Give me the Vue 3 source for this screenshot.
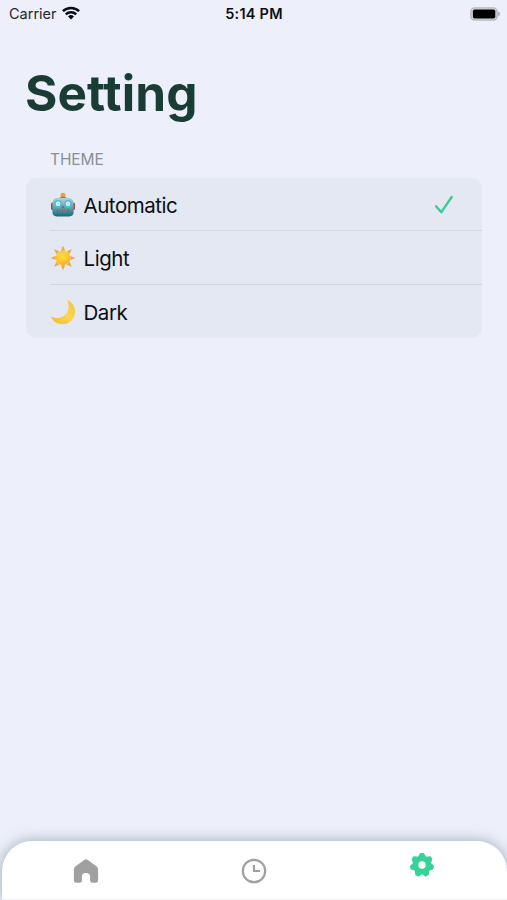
<script setup>
const themes = [
  { id: 'automatic', label: 'Automatic' },
  { id: 'light', label: 'Light' },
  { id: 'dark', label: 'Dark' },
]
const selected = 'automatic'

const polar = (r, deg) => {
  const a = ((deg - 90) * Math.PI) / 180
  return `${(r * Math.cos(a)).toFixed(2)} ${(r * Math.sin(a)).toFixed(2)}`
}

// Eight narrow rays around the sun's disc
const rays = Array.from({ length: 8 }, (_, i) => {
  const d = i * 45
  return `M${polar(12.4, d)}L${polar(7.6, d - 16)}L${polar(7.6, d + 16)}Z`
}).join('')

// Seven-toothed gear outline
const gear = 'M' + Array.from({ length: 7 }, (_, i) => {
  const d = (i * 360) / 7
  return [polar(8.3, d - 19), polar(10.9, d - 6), polar(10.9, d + 6), polar(8.3, d + 19)].join('L')
}).join('L') + 'Z'
</script>

<template>
  <div class="screen">
    <header class="status">
      <div class="carrier">
        <span class="carrier-name">Carrier</span>
        <svg class="wifi" viewBox="0 0 18 14" width="18" height="14">
          <g fill="none" stroke="#0b0b10" stroke-width="2.5">
            <path d="M0.9 5.2a11.6 11.6 0 0 1 16.2 0" />
            <path d="M3.8 8.3a7.4 7.4 0 0 1 10.4 0" />
          </g>
          <path d="M9 13.5 6 10.5a4.3 4.3 0 0 1 6 0z" fill="#0b0b10" />
        </svg>
      </div>
      <span class="time">5:14 PM</span>
      <svg class="battery" viewBox="0 0 31 14" width="31" height="14">
        <rect x=".9" y=".9" width="26.2" height="12.2" rx="3.8" fill="#d3d5da" stroke="#b5b7bd" stroke-width="1.4" />
        <rect x="2.9" y="2.5" width="22.4" height="9" rx="1.8" fill="#000" />
        <path d="M28.2 4.6c2.5.9 2.5 3.9 0 4.8z" fill="#a9abb1" />
      </svg>
    </header>

    <main>
      <h1>Setting</h1>
      <h2>THEME</h2>
      <ul class="list">
        <li v-for="t in themes" :key="t.id" class="row" :class="t.id">
          <svg v-if="t.id === 'automatic'" class="emoji" viewBox="0 0 26 26" width="26" height="26">
            <defs>
              <linearGradient id="robot" x1="0" y1="0" x2="0" y2="1">
                <stop offset="0" stop-color="#b4d3d6" />
                <stop offset=".5" stop-color="#62a9b2" />
                <stop offset="1" stop-color="#17697a" />
              </linearGradient>
            </defs>
            <rect x="1" y="10.5" width="4" height="7.5" rx="1.6" fill="#a6444e" />
            <rect x="21" y="10.5" width="4" height="7.5" rx="1.6" fill="#a6444e" />
            <circle cx="13" cy="3.2" r="2.5" fill="#eca43a" />
            <path d="M9 6.6Q10 4.4 13 4.4T17 6.6z" fill="#a65d52" />
            <path d="M2.4 12Q2.4 5.8 8 5.8h10q5.6 0 5.6 6.2v8q0 4.4-4.4 4.4H6.8q-4.4 0-4.4-4.4z" fill="url(#robot)" />
            <circle cx="8" cy="11.8" r="3.9" fill="#4cbfd5" />
            <circle cx="18" cy="11.8" r="3.9" fill="#4cbfd5" />
            <circle cx="8" cy="11.8" r="2.2" fill="#dcf8fc" />
            <circle cx="18" cy="11.8" r="2.2" fill="#dcf8fc" />
            <circle cx="8" cy="11.8" r=".7" fill="#a0a3aa" />
            <circle cx="18" cy="11.8" r=".7" fill="#a0a3aa" />
            <path d="m13 13.2 1.8 3h-3.6z" fill="#b84c4b" />
            <path d="M7.5 18.6q5.5-1.6 11 0" fill="none" stroke="#6d6a70" stroke-width="1.8" stroke-linecap="round" />
            <path d="M8.4 18.4q4.6-1.2 9.2 0" fill="none" stroke="#b0b7b9" stroke-width=".7" stroke-dasharray="1.4 .9" />
          </svg>
          <svg v-else-if="t.id === 'light'" class="emoji" viewBox="-13 -13 26 26" width="26" height="26">
            <defs>
              <radialGradient id="sun" cx=".45" cy=".35" r=".7">
                <stop offset="0" stop-color="#ffdf43" />
                <stop offset=".6" stop-color="#fdc52b" />
                <stop offset="1" stop-color="#f4a31f" />
              </radialGradient>
            </defs>
            <path :d="rays" fill="#f0a840" />
            <circle r="7.2" fill="url(#sun)" />
          </svg>
          <svg v-else class="emoji" viewBox="0 0 26 26" width="26" height="26">
            <defs>
              <linearGradient id="moon" x1="0" y1="1" x2="1" y2="0">
                <stop offset="0" stop-color="#efb62d" />
                <stop offset=".5" stop-color="#fad74f" />
                <stop offset="1" stop-color="#f0c546" />
              </linearGradient>
            </defs>
            <path d="M17 .8C23 3.5 26.6 9.8 24.6 16.2 22.5 23 15.5 26.4 9 24.8 5 23.8 2.1 21 .8 17.3 6.5 20.6 13.2 19.3 16.6 14.3 19.2 10.3 19.1 5.2 17 .8z" fill="url(#moon)" />
          </svg>
          <div class="label">
            <span>{{ t.label }}</span>
            <svg v-if="t.id === selected" class="check" viewBox="0 0 20 20" width="20" height="20">
              <path d="M2 11.3 7.4 17.2 17.7 2" fill="none" stroke="#3ccb92" stroke-width="2.4" stroke-linecap="round" stroke-linejoin="round" />
            </svg>
          </div>
        </li>
      </ul>
    </main>

    <nav class="tabs">
      <div class="tab">
        <svg viewBox="0 0 26 26" width="26" height="26">
          <path d="M11.2 1.9q1.8-1.4 3.6 0l8.6 6.4q1.7 1.3 1.7 3.2v11q0 2.3-2.2 2.3h-3.7q-2.1 0-2.1-2.2v-4.2q0-3.5-4.1-3.5t-4.1 3.5v4.2q0 2.2-2.1 2.2H3.1q-2.2 0-2.2-2.3v-11q0-1.9 1.7-3.2z" fill="#a0a0a0" />
        </svg>
      </div>
      <div class="tab">
        <svg viewBox="0 0 26 26" width="26" height="26">
          <circle cx="13" cy="13" r="11.2" fill="none" stroke="#a0a0a0" stroke-width="2.2" />
          <path d="M13 7v6h6" fill="none" stroke="#a0a0a0" stroke-width="2.2" />
        </svg>
      </div>
      <div class="tab active">
        <svg viewBox="-13 -13 26 26" width="26" height="26">
          <path :d="gear" fill="#35d398" stroke="#35d398" stroke-width="2.4" stroke-linejoin="round" />
          <circle r="3.7" fill="#fff" />
        </svg>
      </div>
    </nav>
  </div>
</template>

<style>
body {
  margin: 0;
  background: #edf0fb;
}
</style>

<style scoped>
.screen {
  display: flex;
  flex-direction: column;
  width: 507px;
  height: 900px;
  overflow: hidden;
  background: #edf0fb;
  font-family: Inter, "Liberation Sans", sans-serif;
  color: #0d0e13;
}
.status {
  display: grid;
  grid-template-columns: 1fr auto 1fr;
  align-items: center;
  height: 27px;
  padding: 0 6px 0 9px;
  line-height: 27px;
}
.carrier {
  display: flex;
  align-items: center;
  gap: 6px;
}
.carrier-name {
  width: 47px;
  color: #24252b;
  font-size: 14.5px;
}
.wifi {
  margin-bottom: 2px;
}
.time {
  margin-left: -2px;
  font-size: 14.5px;
  font-weight: 600;
  letter-spacing: 0.25px;
}
.battery {
  justify-self: end;
}
main {
  flex: 1;
  padding: 0 25px 0 26px;
}
h1 {
  margin: 35px 0 0 -1px;
  font-size: 49.5px;
  line-height: 62px;
  font-weight: 700;
  letter-spacing: 0.1px;
  color: #193d35;
}
h2 {
  margin: 26px 0 8px 24px;
  font-size: 15.5px;
  line-height: 20px;
  font-weight: 400;
  letter-spacing: -0.1px;
  color: #8c8e98;
}
.list {
  margin: 0;
  padding: 0;
  list-style: none;
  height: 160px;
  border-radius: 10px;
  background: #e3e8f2;
  overflow: hidden;
}
.row {
  display: flex;
  align-items: center;
  box-sizing: border-box;
  height: 54px;
  margin-left: 24px;
  padding-top: 1px;
  font-size: 20.5px;
  letter-spacing: -0.45px;
  border-bottom: 1px solid #d3d7e1;
}
.row.automatic {
  height: 53px;
  padding-top: 2px;
}
.row.dark {
  padding-top: 0;
  border-bottom: 0;
}
.emoji {
  flex: none;
  margin-right: 7.5px;
}
.label {
  flex: 1;
  display: flex;
  align-items: center;
  justify-content: space-between;
  padding-right: 28px;
}
.tabs {
  display: grid;
  grid-template-columns: repeat(3, 1fr);
  box-sizing: border-box;
  height: 59.5px;
  margin: 0 0.5px 0 1.5px;
  padding-top: 17.5px;
  border-radius: 30px 30px 0 0;
  border-bottom: 1px solid #f1f1f1;
  background: #fff;
  box-shadow: 0 0 14px rgba(70, 100, 110, 0.5);
}
.tab {
  display: flex;
  justify-content: center;
  align-items: flex-start;
}
.active {
  margin-top: -6px;
}
</style>
